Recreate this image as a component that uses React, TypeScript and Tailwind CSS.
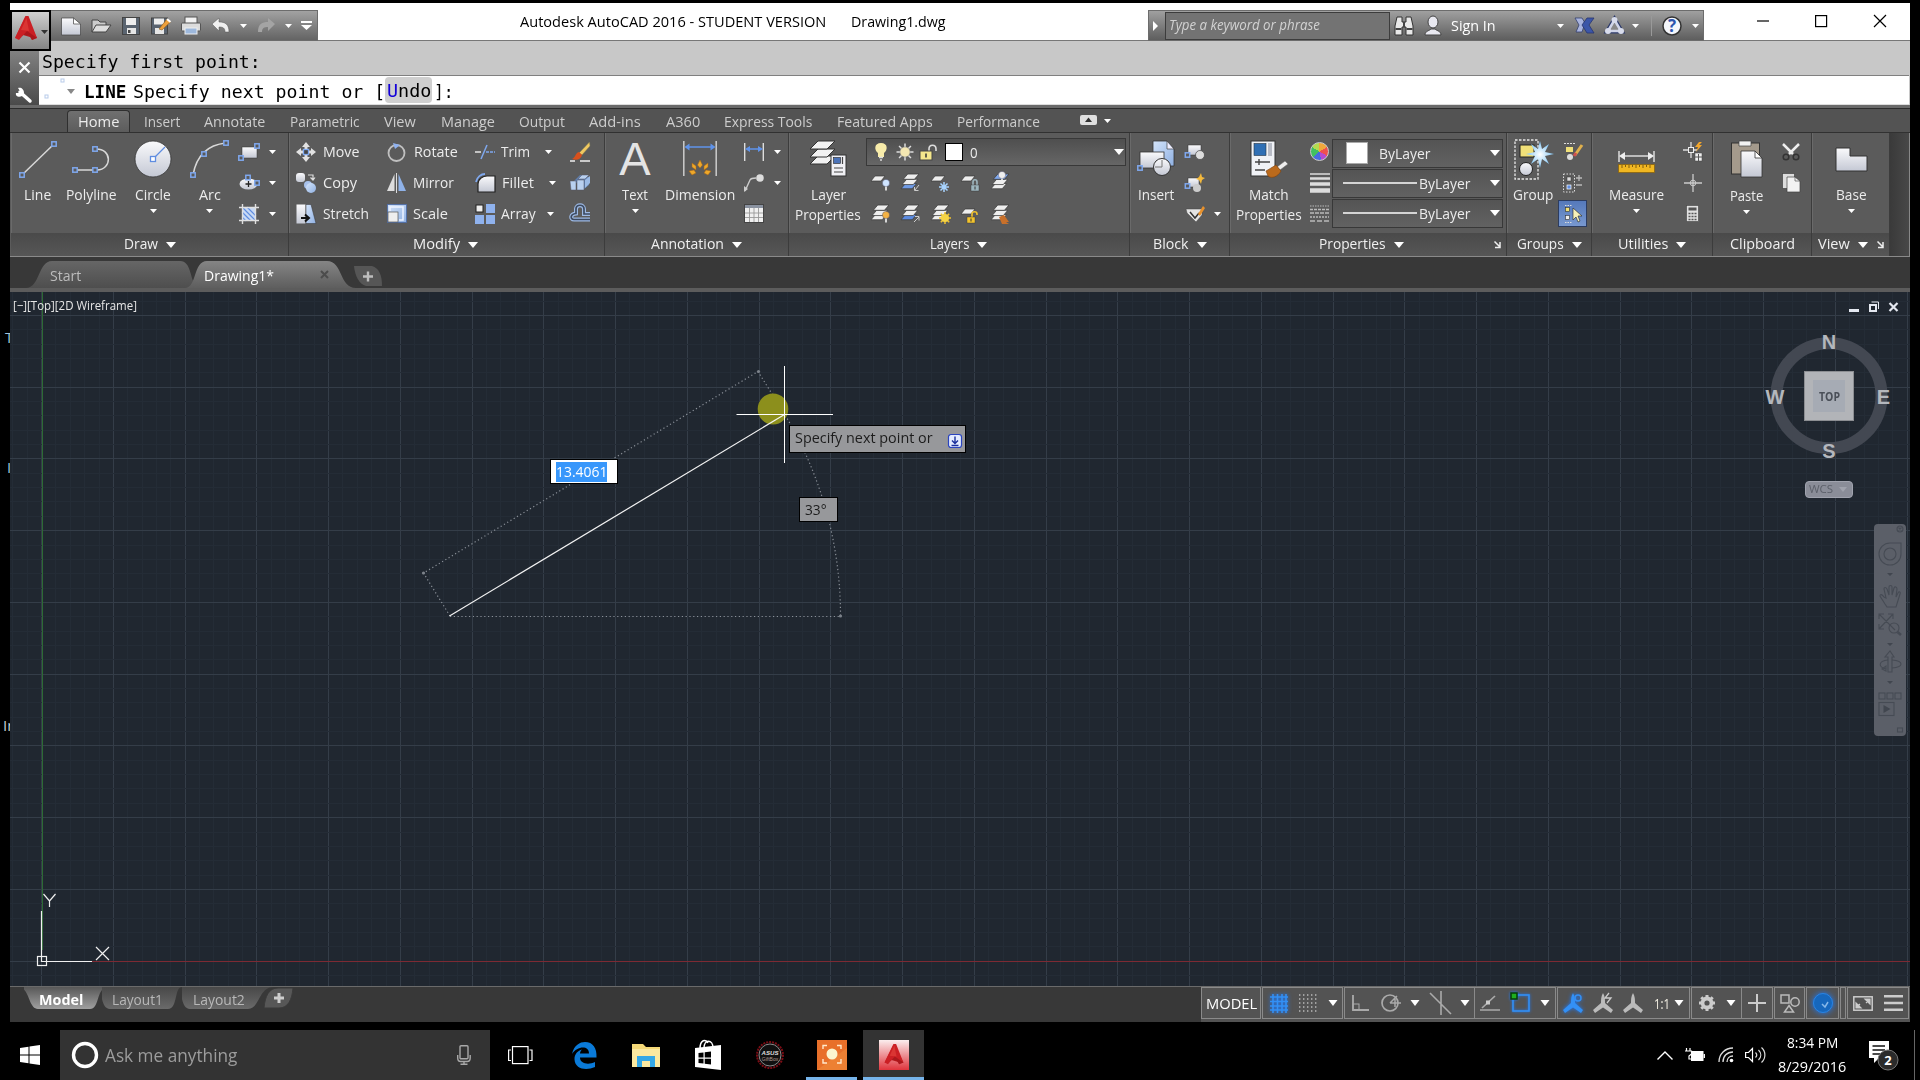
import { useLayoutEffect, useRef, useState } from "react";
import type { ReactNode } from "react";

/* Text squeezed or stretched to a known width. */
function Fit({ w, children, className = "" }: { w: number; children: ReactNode; className?: string }) {
  const ref = useRef<HTMLSpanElement>(null);
  const [k, setK] = useState(1);
  useLayoutEffect(() => {
    if (ref.current) setK(w / ref.current.offsetWidth);
  }, [w]);
  return (
    <span className={"inline-block shrink-0 whitespace-nowrap leading-5 " + className} style={{ width: w }}>
      <span ref={ref} className="inline-block origin-left whitespace-pre" style={{ transform: `scaleX(${k})` }}>
        {children}
      </span>
    </span>
  );
}

function S({ w, h, children, className = "" }: { w: number; h: number; children: ReactNode; className?: string }) {
  return (
    <svg width={w} height={h} viewBox={`0 0 ${w} ${h}`} className={"block shrink-0 overflow-visible " + className}>
      {children}
    </svg>
  );
}

function Caret({ big = false, className = "" }: { big?: boolean; className?: string }) {
  return big ? (
    <S w={10} h={6} className={className}><path d="M0 0H10L5 6Z" fill="#fff" /></S>
  ) : (
    <S w={7} h={4} className={className}><path d="M0 0H7L3.5 4Z" fill="#fff" /></S>
  );
}

const Node = ({ x, y }: { x: number; y: number }) => (
  <rect x={x - 2.2} y={y - 2.2} width={4.4} height={4.4} fill="#5a5a5a" stroke="#7fa8ee" strokeWidth={1.5} />
);

const Sheet = ({ x, y, f = "#eee" }: { x: number; y: number; f?: string }) => (
  <path d={`M${x + 4} ${y}h10l-4 5h-10z`} fill={f} stroke="#3a3a3a" strokeWidth={0.7} />
);

const Stack = ({ a = "#eee", b = "#eee", c = "#eee" }: { a?: string; b?: string; c?: string }) => (
  <g transform="scale(1.12 1.05)">
    <Sheet x={0} y={10} f={c} />
    <Sheet x={1} y={6} f={b} />
    <Sheet x={2} y={1} f={a} />
  </g>
);

function Defs() {
  return (
    <svg className="absolute h-0 w-0">
      <defs>
        <linearGradient id="metal" x1="0" y1="0" x2="0" y2="1"><stop offset="0" stopColor="#fafafc" /><stop offset="1" stopColor="#c4c8d4" /></linearGradient>
        <linearGradient id="sky" x1="0" y1="0" x2="1" y2="1"><stop offset="0" stopColor="#d4e4fa" /><stop offset="1" stopColor="#8fb0e2" /></linearGradient>
        <linearGradient id="tabOn" x1="0" y1="0" x2="0" y2="1"><stop offset="0" stopColor="#858585" /><stop offset="1" stopColor="#5e5e5e" /></linearGradient>
        <linearGradient id="tabOff" x1="0" y1="0" x2="0" y2="1"><stop offset="0" stopColor="#666" /><stop offset="1" stopColor="#4e4e4e" /></linearGradient>
        <linearGradient id="modelOn" x1="0" y1="0" x2="0" y2="1"><stop offset="0" stopColor="#585858" /><stop offset="1" stopColor="#a0a0a0" /></linearGradient>
        <linearGradient id="layoutOff" x1="0" y1="0" x2="0" y2="1"><stop offset="0" stopColor="#484848" /><stop offset="1" stopColor="#6a6a6a" /></linearGradient>
        <linearGradient id="taskAcad" x1="0" y1="0" x2="0" y2="1"><stop offset="0" stopColor="#fbeeee" /><stop offset="1" stopColor="#e0343c" /></linearGradient>
        <radialGradient id="spark"><stop offset="0" stopColor="#fff" /><stop offset="1" stopColor="#7cc3f5" /></radialGradient>
      </defs>
    </svg>
  );
}

const LogoA = () => (
  <>
    <path d="M10.500 0L0 22L8 19.500L10.500 12Z" fill="#e0312f" />
    <path d="M10.500 0L22 22L15 21L8 19L13 14Z" fill="#b3171b" />
    <path d="M10.500 0L13.500 0L22 22L17 24L14 19H8L4 24L0 22Z" fill="#cb1f24" />
    <path d="M11.500 2L14 15L6 14Z" fill="#e4453d" opacity={0.6} />
    <path d="M4 24L8 19H14L17 24L22 22L12 15Z" fill="#8f1015" opacity={0.55} />
  </>
);

function QuickAccess() {
  return (
    <div className="mt-[7px] flex h-[31px] w-[267px] items-center border border-l-0 border-[#6c6c6c] bg-linear-to-b from-[#a2a2a2] to-[#646464]">
      <S w={20} h={18} className="ml-[10px]"><path d="M.5 1h12l7 6v11H.500z" fill="url(#metal)" stroke="#444" strokeWidth={0.700} /><path d="M12.500 1l7 6h-7z" fill="#fff" stroke="#555" strokeWidth={0.800} /></S>
      <S w={20} h={16} className="ml-[10px]"><path d="M1 14V2h6l2 2h6v4" fill="#ccc" stroke="#444" /><path d="M1 14L5 7h15l-5 7z" fill="#ddd" stroke="#444" /></S>
      <S w={18} h={18} className="ml-[11px]"><rect x={0.500} y={0.500} width={17} height={17} fill="#5a6470" stroke="#444" /><rect x={4} y={1} width={10} height={7} fill="#eee" /><rect x={5} y={11} width={9} height={6} fill="#e6e6e6" /><rect x={6} y={13} width={2.500} height={3} fill="#444" /></S>
      <S w={20} h={18} className="ml-[11px]"><rect x={0.500} y={1} width={16} height={16} fill="#5a6470" stroke="#444" /><rect x={3} y={1.500} width={10} height={6} fill="#eee" /><rect x={4} y={11} width={9} height={6} fill="#e6e6e6" /><path d="M8 12L16 2l3.500 3L11 13z" fill="#eda03c" stroke="#8a5a1a" strokeWidth={0.600} /><path d="M16 2l3.500 3" stroke="#fff" strokeWidth={2} /></S>
      <S w={20} h={18} className="ml-[10px]"><rect x={4} y={0} width={12} height={7} fill="#f2f2f2" stroke="#555" /><rect x={0.500} y={6} width={19} height={8} rx={1} fill="#dcdcdc" stroke="#555" /><rect x={4} y={11} width={12} height={6} fill="#9db8dc" stroke="#eee" /></S>
      <S w={18} h={15} className="ml-[11px]"><path d="M0 6L7 0v4c6 0 10 2 10 10h-4c0-4-2-5-6-5v4z" fill="#f0f0f0" stroke="#555" strokeWidth={0.500} /></S>
      <Caret className="ml-[10px]" />
      <S w={18} h={15} className="ml-[10px]"><path d="M18 6L11 0v4C5 4 1 6 1 14h4c0-4 2-5 6-5v4z" fill="#a4a4a4" /></S>
      <Caret className="ml-[10px]" />
      <S w={11} h={9} className="ml-[9px]"><path d="M0 0H11V2H0ZM0 4H11L5.500 9Z" fill="#fff" /></S>
    </div>
  );
}

function InfoCenter() {
  return (
    <div className="mt-[7px] flex h-[31px] w-[556px] items-center border border-[#6c6c6c] bg-linear-to-b from-[#a0a0a0] to-[#5e5e5e]">
      <S w={5} h={10} className="ml-1"><path d="M0 0L5 5L0 10Z" fill="#fff" /></S>
      <div className="ml-[7px] flex h-[28px] w-[225px] items-center border border-[#3c3c3c] bg-[#737373] pl-[3px]">
        <Fit w={151} className="-mt-[2px] text-[14px] text-[#d2d2d2] italic">Type a keyword or phrase</Fit>
      </div>
      <S w={20} h={18} className="ml-1"><path d="M3 0h5v5h4V0h5l2 9v9h-7v-8H8v8H1V9z" fill="#e8e8e8" stroke="#333" /><path d="M1.500 12h6M12.500 12h6M10 5v5" stroke="#444" strokeWidth={2} /></S>
      <S w={16} h={19} className="ml-[11px]"><ellipse cx={8} cy={6} rx={5} ry={6} fill="#e8e8f0" stroke="#444" /><path d="M0 19c0-4 4-4 6-6h4c2 2 6 2 6 6z" fill="#e8e8f0" stroke="#444" /></S>
      <Fit w={45} className="-mt-[2px] ml-[10px] text-[15px] text-white">Sign In</Fit>
      <Caret className="ml-[61px]" />
      <S w={19} h={17} className="ml-[11px]"><path d="M0 1h7l3 5-3 9H1l3-7z" fill="#a9b4de" stroke="#34406f" strokeWidth={0.800} /><path d="M19 1h-7L7 8l5 8h7l-5-8z" fill="#3c56a8" stroke="#28366f" strokeWidth={0.800} /></S>
      <S w={19} h={17} className="ml-[11px]"><path d="M9.500 3L16 14H3Z" fill="none" stroke="#2c3a6b" strokeWidth={5} /><path d="M9.500 3L16 14H3Z" fill="#888" stroke="#cfd4e8" strokeWidth={2.500} /><circle cx={9.500} cy={3} r={3} fill="#d8dcec" /><circle cx={3} cy={14} r={3} fill="#d8dcec" /><circle cx={16} cy={14} r={3} fill="#d8dcec" /></S>
      <Caret className="ml-2" />
      <div className="ml-[12px] h-5 w-px bg-[#999]" />
      <S w={20} h={20} className="ml-[10px]"><circle cx={10} cy={10} r={9} fill="#f4f6fb" stroke="#333" strokeWidth={1.500} /><text x={10} y={16} textAnchor="middle" fontSize={17} fontWeight={700} fill="#2e55ae" fontFamily="Open Sans, sans-serif">?</text></S>
      <Caret className="ml-[10px]" />
    </div>
  );
}

function TitleBar() {
  return (
    <header className="relative flex h-[38px] border-b border-[#777] bg-white">
      <div className="absolute top-[7px] left-0 z-10 flex h-[41px] w-[41px] border-2 border-black bg-linear-to-b from-[#cfcfcf] to-[#858585]">
        <S w={24} h={25} className="mt-1 ml-[3px]"><LogoA /></S>
        <S w={7} h={4} className="mt-[18px] ml-[2px]"><path d="M0 0H7L3.500 4Z" fill="#333" /></S>
      </div>
      <div className="w-[41px]" />
      <QuickAccess />
      <div className="flex w-[830px] items-center gap-[25px] pb-0 pl-[202px]">
        <Fit w={306} className="-mt-[1px] text-[15px] text-black">Autodesk AutoCAD 2016 - STUDENT VERSION</Fit>
        <Fit w={95} className="-mt-[1px] text-[15px] text-black">Drawing1.dwg</Fit>
      </div>
      <InfoCenter />
      <div className="flex items-start pt-[12px] pl-[53px]">
        <S w={12} h={12}><path d="M0 6H12" stroke="#000" strokeWidth={1.200} /></S>
        <S w={12} h={12} className="ml-[46px]"><rect x={0.600} y={0.600} width={11} height={11} fill="none" stroke="#000" strokeWidth={1.200} /></S>
        <S w={12} h={12} className="ml-[47px]"><path d="M0 0L12 12M12 0L0 12" stroke="#000" strokeWidth={1.200} /></S>
      </div>
    </header>
  );
}

function CommandLine() {
  return (
    <section className="flex h-[64px] bg-[#c8c8c8]">
      <div className="flex w-[29px] flex-col items-center bg-linear-to-b from-[#8c8c8c] to-[#4a4a4a] pt-[21px] pr-[1px]">
        <S w={11} h={11}><path d="M0.500 0.500L10.500 10.500M10.500 .5L.5 10.500" stroke="#fff" strokeWidth={2.200} /></S>
        <S w={18} h={17} className="mt-[14px]"><path d="M5 5L15 14" stroke="#fff" strokeWidth={3.500} strokeLinecap="round" /><path d="M3 1l2 3-1 2-3 0C0 9 4 11 7 9l2-3C9 2 6 0 3 1z" fill="#fff" /></S>
      </div>
      <div className="flex w-[1870px] flex-col font-['DejaVu_Sans_Mono',monospace] text-[18px] text-black">
        <div className="flex h-[35px] items-center border-b border-[#808080] pt-[9px] pl-[3px]">
          <Fit w={219} className="-mt-[1px]">Specify first point:</Fit>
        </div>
        <div className="flex h-[29px] items-center border-b border-[#ddd] bg-white">
          <S w={20} h={20} className="ml-[5px]"><rect x={1} y={15} width={3} height={3} fill="none" stroke="#b8cbea" /><rect x={17} y={-1} width={3} height={3} fill="none" stroke="#b8cbea" /></S>
          <S w={8} h={5} className="mt-[2px] ml-[3px]"><path d="M0 0H8L4 5Z" fill="#888" /></S>
          <Fit w={42} className="mt-[3px] ml-[9px] font-bold">LINE</Fit>
          <Fit w={252} className="mt-[3px] ml-[7px]">Specify next point or [</Fit>
          <span className="flex h-[26px] w-[47px] items-center justify-center rounded bg-[#cfcfcf]">
            <Fit w={44} className="mt-[2px]"><span className="text-[#1400d8]">U</span>ndo</Fit>
          </span>
          <Fit w={20} className="mt-[3px] ml-[2px]">]:</Fit>
        </div>
      </div>
    </section>
  );
}

const TABS: [string, number][] = [
  ["Insert", 36], ["Annotate", 61], ["Parametric", 70], ["View", 32], ["Manage", 54], ["Output", 46], ["Add-ins", 52],
  ["A360", 34], ["Express Tools", 88], ["Featured Apps", 96], ["Performance", 83],
];

function RibbonTabs() {
  return (
    <nav className="flex h-[28px] items-end border-t-[3px] border-b border-t-[#6a6a6a] border-b-[#313131] bg-[#535353] shadow-[inset_0_1px_0_#2c2c2c]">
      <div className="ml-[57px] flex h-[22px] w-[63px] items-center justify-center rounded-t-sm border border-b-0 border-[#2f2f2f] bg-linear-to-b from-[#707070] to-[#5c5c5c]">
        <Fit w={41} className="-mt-[2px] text-[15px] text-[#ececec]">Home</Fit>
      </div>
      <div className="ml-[14px] flex h-[22px] items-center gap-[24.400px] text-[15px] text-[#cdcdcd]">
        {TABS.map(([t, w]) => <Fit key={t} w={w} className="-mt-[1px]">{t}</Fit>)}
      </div>
      <S w={17} h={10} className="mb-[7px] ml-[40px]"><rect width={17} height={10} rx={2} fill="#e0e0e0" /><path d="M8.500 2.500L12 7H5Z" fill="#333" /></S>
      <Caret className="mb-[9px] ml-[7px]" />
    </nav>
  );
}

function Panel({ className, title, titleW, caret = true, pad = "", launcher = false, children }: {
  className: string; title: string; titleW: number; caret?: boolean; pad?: string; launcher?: boolean; children: ReactNode;
}) {
  return (
    <section className={"flex shrink-0 flex-col border-r border-[#3c3c3c] bg-[#5b5b5b] shadow-[inset_1px_0_0_#6a6a6a] " + className}>
      <div className="flex h-[100px]">{children}</div>
      <div className={"relative flex h-[23px] items-center justify-center bg-linear-to-b from-[#4a4a4a] to-[#565656] text-[15px] text-[#f0f0f0] " + pad}>
        <Fit w={titleW} className="-mt-[3px]">{title}</Fit>
        {caret && <Caret big className="ml-2" />}
        {launcher && (
          <S w={7} h={7} className="absolute top-[8px] right-[5px]"><path d="M0.500 .5L6 6M6 1V6.500H1" fill="none" stroke="#eee" strokeWidth={1.500} /></S>
        )}
      </div>
    </section>
  );
}

function Big({ className, iconBox = "h-[55px]", label, w, label2, w2 = 0, caret = false, children }: {
  className: string; iconBox?: string; label: string; w: number; label2?: string; w2?: number; caret?: boolean; children: ReactNode;
}) {
  return (
    <div className={"flex shrink-0 flex-col items-center text-[15px] text-[#ececec] " + className}>
      <div className={"flex items-start justify-center pt-[7px] " + iconBox}>{children}</div>
      <Fit w={w} className="-mt-[4px]">{label}</Fit>
      {label2 && <Fit w={w2}>{label2}</Fit>}
      {caret && <Caret className="mt-[5px]" />}
    </div>
  );
}

const Rows = ({ className, children }: { className: string; children: ReactNode }) => (
  <div className={"flex shrink-0 flex-col pt-[3px] " + className}>{children}</div>
);
const Row = ({ className = "", children }: { className?: string; children?: ReactNode }) => (
  <div className={"flex h-[31px] items-center text-[15px] text-[#ececec] " + className}>{children}</div>
);

function DrawPanel() {
  return (
    <Panel className="w-[278px]" title="Draw" titleW={34}>
      <Big className="w-[53px]" label="Line" w={27}>
        <S w={38} h={38}><path d="M3 35L35 4" stroke="#d8d8d8" strokeWidth={1.500} /><Node x={3} y={35} /><Node x={35} y={4} /></S>
      </Big>
      <Big className="w-[54px]" label="Polyline" w={51}>
        <S w={40} h={38}><path d="M3 30H26C41 30 42 8 24 9" fill="none" stroke="#d8d8d8" strokeWidth={1.500} /><Node x={4} y={30} /><Node x={24} y={30} /><Node x={24} y={9} /></S>
      </Big>
      <Big className="w-[70px]" label="Circle" w={36} caret>
        <S w={38} h={38}><circle cx={19} cy={19} r={18} fill="url(#metal)" stroke="#333" strokeWidth={0.800} /><path d="M19 19L31 7" stroke="#5f8de0" strokeWidth={1.200} /><rect x={16.500} y={16.500} width={5} height={5} fill="#fff" stroke="#5f8de0" strokeWidth={1.300} /></S>
      </Big>
      <Big className="w-[43px]" label="Arc" w={22} caret>
        <S w={40} h={38}><path d="M3 35C6 18 16 5 36 3" fill="none" stroke="#d8d8d8" strokeWidth={1.500} /><Node x={3} y={35} /><Node x={14} y={14} /><Node x={36} y={3} /></S>
      </Big>
      <Rows className="w-[36px] items-center">
        <Row><S w={20} h={16}><rect x={3} y={3} width={15} height={11} fill="url(#metal)" stroke="#333" strokeWidth={0.500} /><Node x={2} y={14} /><Node x={18} y={2} /></S></Row>
        <Row><S w={20} h={14}><ellipse cx={9.500} cy={8} rx={9} ry={5.500} fill="url(#metal)" /><path d="M9.500 5v6M6.500 8h6" stroke="#222" strokeWidth={1.300} /><Node x={9} y={1.500} /><Node x={18} y={7} /></S></Row>
        <Row><S w={20} h={20}><rect x={3} y={3} width={14} height={14} fill="#c8daf5" /><path d="M3 8L12 17M3 3L17 17M8 3L17 12M3 13l4 4" stroke="#5f8de0" strokeWidth={1.200} /><path d="M3.500 0V20M0 3.500H20M16.500 0V20M0 16.500H20" stroke="#e0e0e0" strokeWidth={1.400} /></S></Row>
      </Rows>
      <Rows className="w-[10px] items-center"><Row><Caret /></Row><Row><Caret /></Row><Row><Caret /></Row></Rows>
    </Panel>
  );
}

function ModifyPanel() {
  return (
    <Panel className="w-[316px]" title="Modify" titleW={47} pad="pr-[2px]">
      <Rows className="ml-[7px] w-[91px]">
        <Row><S w={20} h={20}><path d="M10 0l4 5h-2.500v3h-3V5H6zM10 20l4-5h-2.500v-3h-3v3H6zM0 10l5-4v2.500h3v3H5V14zM20 10l-5-4v2.500h-3v3h3V14z" fill="#e2e2e2" /><rect x={7.500} y={7.500} width={5} height={5} fill="#444" stroke="#7fa8ee" strokeWidth={1.300} /></S><Fit w={36} className="-mt-px ml-[6.500px]">Move</Fit></Row>
        <Row><S w={20} h={20}><rect width={9} height={9} rx={3} fill="url(#metal)" /><circle cx={12} cy={12} r={4} fill="#a8c2ec" /><circle cx={15} cy={15} r={5} fill="url(#sky)" /><path d="M12 2h5v4M14.500 4.500L17 7l2-2.500" fill="none" stroke="#ddd" strokeWidth={1.200} /></S><Fit w={34} className="-mt-px ml-[7px]">Copy</Fit></Row>
        <Row><S w={20} h={20}><rect x={0.500} y={0.500} width={9} height={19} fill="url(#metal)" /><path d="M10 .5h5l5 19H10z" fill="url(#sky)" stroke="#333" strokeWidth={0.500} /><path d="M5 14h7M9 10.500L13 14 9 17.500" stroke="#111" strokeWidth={2} fill="none" /></S><Fit w={46} className="-mt-px ml-[7px]">Stretch</Fit></Row>
      </Rows>
      <Rows className="w-[88px]">
        <Row><S w={19} h={20}><circle cx={9.500} cy={11} r={8} fill="none" stroke="#c0c0c0" strokeWidth={1.800} /><path d="M6 1l7 2-5 4z" fill="#8fb2f0" /></S><Fit w={44} className="-mt-px ml-[8px]">Rotate</Fit></Row>
        <Row><S w={19} h={20}><path d="M7.500 1V18H0Z" fill="#ddd" /><path d="M11.500 1V18H19Z" fill="#8fb2e8" /><path d="M9.500 0V20" stroke="#ddd" /></S><Fit w={41} className="-mt-px ml-[7px]">Mirror</Fit></Row>
        <Row><S w={20} h={19}><rect x={0.500} y={0.500} width={19} height={18} fill="url(#sky)" stroke="#4a6aa8" strokeWidth={0.800} /><path d="M3 7V3H16V16H12" fill="none" stroke="#eef4ff" strokeWidth={1.500} /><rect x={1} y={8} width={10} height={10} fill="#eee" stroke="#555" strokeWidth={0.700} /></S><Fit w={35} className="-mt-px ml-[6px]">Scale</Fit></Row>
      </Rows>
      <Rows className="w-[95px]">
        <Row><S w={20} h={16}><path d="M0 8H6" stroke="#e6e6e6" strokeWidth={1.500} /><path d="M6 15L12 1" stroke="#7fa8ee" strokeWidth={1.500} /><path d="M11 8H20" stroke="#7fa8ee" strokeWidth={1.300} strokeDasharray="3 1" /></S><Fit w={29} className="-mt-px ml-[6px]">Trim</Fit><Caret className="ml-[15px]" /></Row>
        <Row><S w={20} h={20}><path d="M3 19V11C3 6 8 3 12 3h8v16z" fill="url(#metal)" stroke="#222" strokeWidth={1.200} /><path d="M1 9C2 4 6 1 10 1" fill="none" stroke="#7fa8ee" strokeWidth={1.800} /></S><Fit w={32} className="-mt-px ml-[7px]">Fillet</Fit><Caret className="ml-[15px]" /></Row>
        <Row><S w={20} h={20}><rect x={1} y={1} width={7} height={7} fill="#eee" stroke="#222" /><rect x={11} width={9} height={9} fill="#8fb2ee" /><rect y={11} width={9} height={9} fill="#8fb2ee" /><rect x={11} y={11} width={9} height={9} fill="#8fb2ee" /></S><Fit w={35} className="-mt-px ml-[6px]">Array</Fit><Caret className="ml-[11px]" /></Row>
      </Rows>
      <Rows className="w-[22px]">
        <Row><S w={20} h={20}><path d="M19.500 0L9 11l3 2L20 4z" fill="#f0c860" stroke="#775" strokeWidth={0.500} /><path d="M9 10C5 11 6 15 2 17c5 2 9 0 10-4z" fill="#d8501c" /><path d="M0 19H5M10 19H20" stroke="#eee" strokeWidth={1.400} /></S></Row>
        <Row><S w={20} h={18}><path d="M4 7L10 1l9 2v8l-5 4z" fill="#5f7fae" /><path d="M0 7h6v9H1zM7 6h7v10H7zM8 5l4-4h7l-4 4z" fill="#b8d0f0" stroke="#556" strokeWidth={0.500} /><path d="M15 6l5-4v7l-5 5z" fill="#9cbbe6" /></S></Row>
        <Row><S w={20} h={19}><path d="M20 15.500H4C0 15.500 0 10 6 9.500V5c0-5 8-5 8 0v5H20" fill="none" stroke="#9db9e4" strokeWidth={4} /><path d="M20 15.500H4C0 15.500 0 10 6 9.500V5c0-5 8-5 8 0v5H20" fill="none" stroke="#3c4a60" strokeWidth={1.700} /></S></Row>
      </Rows>
    </Panel>
  );
}

function AnnotationPanel() {
  return (
    <Panel className="w-[184px]" title="Annotation" titleW={73}>
      <Big className="ml-[5px] w-[50px]" label="Text" w={26} caret>
        <span className="w-[34px] text-center font-['Liberation_Sans',Arial,sans-serif] text-[47px] leading-[38px] text-[#e4e4e4]">A</span>
      </Big>
      <Big className="w-[79px]" label="Dimension" w={70}>
        <S w={34} h={38}><path d="M.8 1V36M33.200 1V36" stroke="#ccc" strokeWidth={1.500} /><path d="M3 7H31" stroke="#5f93ea" strokeWidth={1.500} /><path d="M1.500 7l5-3.500v7zM32.500 7l-5-3.500v7z" fill="#5f93ea" /><path d="M17 20l2.500 5-2.500 3-2.500-3zM9 23l4 3v4l-4-3zM25 23l-4 3v4l4-3zM6 31l5-1 2 3-4 2zM28 31l-5-1-2 3 4 2z" fill="#eea82a" stroke="#a86414" strokeWidth={0.500} /></S>
      </Big>
      <Rows className="w-[29px] items-center">
        <Row><S w={20} h={18}><path d="M.7 0V18M19.300 0V18" stroke="#ddd" strokeWidth={1.400} /><path d="M3 6H17" stroke="#5f93ea" strokeWidth={1.500} /><path d="M1 6l5-3v6zM19 6l-5-3v6z" fill="#5f93ea" /></S></Row>
        <Row><S w={20} h={18}><path d="M1 17L6 6C7 4 9 4 12 4" fill="none" stroke="#ccc" strokeWidth={1.400} /><circle cx={16} cy={4} r={3.800} fill="#ddd" /><path d="M0 18l0-6 4 3z" fill="#ccc" /></S></Row>
        <Row><S w={20} h={19}><rect x={0.500} y={0.500} width={19} height={18} fill="#f0f0f0" stroke="#444" /><rect x={1} y={1} width={18} height={3} fill="#8a92a0" /><path d="M1 9H19M1 13.500H19M5.500 4V18M10 4V18M14.500 4V18" stroke="#999" strokeWidth={0.900} /></S></Row>
      </Rows>
      <Rows className="w-[18px] items-center"><Row><Caret /></Row><Row><Caret /></Row><Row /></Rows>
    </Panel>
  );
}

const Bulb = ({ x, y, f = "#cfe4ff" }: { x: number; y: number; f?: string }) => (
  <><circle cx={x} cy={y} r={3.600} fill={f} stroke="#446" strokeWidth={0.400} /><path d={`M${x} ${y + 3.600}v4`} stroke="#eee" strokeWidth={1.700} /></>
);
const Burst = ({ x, y, f, r = 5 }: { x: number; y: number; f: string; r?: number }) => (
  <path d={`M${x - r} ${y}h${2 * r}M${x} ${y - r}v${2 * r}M${x - r * 0.7} ${y - r * 0.7}l${r * 1.4} ${r * 1.4}M${x + r * 0.7} ${y - r * 0.7}l${-r * 1.4} ${r * 1.4}`} stroke={f} strokeWidth={1.500} />
);
const Lock = ({ x, y, f, open = false }: { x: number; y: number; f: string; open?: boolean }) => (
  <><path d={open ? `M${x + 5} ${y}v-3c0-3 5-3 5 0v1` : `M${x + 2} ${y}v-3c0-3 4-3 4 0v3`} fill="none" stroke={f} strokeWidth={1.600} /><rect x={x} y={y} width={8} height={6} fill={f} stroke="#333" strokeWidth={0.400} /><path d={`M${x + 4} ${y + 1.500}v3`} stroke="#333" /></>
);

function LayersPanel() {
  return (
    <Panel className="w-[341px]" title="Layers" titleW={39} pad="pr-[1px]">
      <Big className="w-[78px]" label="Layer" w={35} label2="Properties" w2={66}>
        <S w={37} h={38}>
          {[16, 9, 1].map((y) => <path key={y} d={`M8 ${y}H25L17 ${y + 8}H0Z`} fill="#f2f2f2" stroke="#333" />)}
          <rect x={21} y={15} width={15} height={21} fill="#f0f0f4" stroke="#333" /><rect x={23.500} y={17.500} width={7} height={6} fill="#4a72b8" stroke="#222" strokeWidth={0.600} /><path d="M24 28h9M24 32h9M32.500 17v7" stroke="#444" strokeWidth={1.200} />
        </S>
      </Big>
      <div className="-ml-[1px] flex flex-col">
        <div className="mt-[5px] flex h-[28px] w-[260px] items-center border border-[#383838] bg-linear-to-b from-[#4f4f4f] to-[#666] text-[15px] text-[#ececec]">
          <S w={12} h={18} className="ml-2"><path d="M6 0C-1 0-1 7 3 10v4h6v-4C13 7 13 0 6 0z" fill="#f8ecaa" /><path d="M4 14.500h4M5 17h2" stroke="#ddd" strokeWidth={1.500} /></S>
          <S w={18} h={18} className="ml-[9px]"><Burst x={9} y={9} f="#ddd" r={8.500} /><circle cx={9} cy={9} r={5} fill="#f4e7b2" stroke="#888" strokeWidth={0.500} /></S>
          <S w={19} h={18} className="ml-[5px]"><path d="M10 9V6c0-5 7-5 7 0v2" fill="none" stroke="#ddd" strokeWidth={1.600} /><rect x={1} y={8} width={12} height={9} fill="#f4e78c" stroke="#444" /><path d="M7 10.500v4" stroke="#333" strokeWidth={1.500} /></S>
          <div className="ml-[7px] h-[18px] w-[18px] border border-black bg-white" />
          <Fit w={8} className="ml-[7px]">0</Fit>
          <Caret big className="ml-auto mr-[1px]" />
        </div>
        <div className="mt-[1px] flex h-[31px] items-center pl-[5px] [&>svg]:mr-[10px]">
          <S w={20} h={20}><Sheet x={0} y={3} /><Bulb x={15} y={10} /></S>
          <S w={20} h={20}><Stack a="#eee" b="#eee" c="#6f9be6" /><path d="M18 12l-4 5M13.500 14v3.500h4" stroke="#ccc" fill="none" /></S>
          <S w={20} h={20}><Sheet x={0} y={3} /><Burst x={13} y={14} f="#a8d4ff" r={5} /></S>
          <S w={20} h={20}><Sheet x={0} y={3} /><Lock x={10} y={12} f="#9db5bd" /></S>
          <S w={20} h={20}><Stack a="#7fa8ee" /><Bulb x={11} y={2} f="#eee" /></S>
        </div>
        <div className="flex h-[31px] items-center pl-[5px] [&>svg]:mr-[10px]">
          <S w={20} h={20}><Stack /><Bulb x={15} y={11} f="#f4b244" /></S>
          <S w={20} h={20}><Stack c="#5a8ae0" /><path d="M13 18l5-5M14 12.500h4v4" stroke="#ccc" fill="none" /></S>
          <S w={20} h={20}><Stack /><Burst x={14} y={14} f="#f2c32e" r={6} /><circle cx={14} cy={14} r={4} fill="#f6d445" /></S>
          <S w={20} h={20}><Sheet x={0} y={5} /><Lock x={6} y={13} f="#f2c32e" open /></S>
          <S w={20} h={20}><Stack /><path d="M8 13l5-2 5 7-3 0 3 2-7 0z" fill="#c8702a" /></S>
        </div>
      </div>
    </Panel>
  );
}

function BlockPanel() {
  return (
    <Panel className="w-[100px]" title="Block" titleW={36}>
      <Big className="w-[52px]" label="Insert" w={36}>
        <S w={38} h={38}><path d="M16 1H30L37 9V26H16Z" fill="url(#sky)" stroke="#333" strokeWidth={0.800} /><path d="M30 1L37 9H30Z" fill="#eef" stroke="#444" strokeWidth={0.700} /><rect x={3} y={12} width={24} height={16} fill="url(#metal)" stroke="#333" strokeWidth={0.800} /><circle cx={25} cy={27} r={8.500} fill="url(#metal)" stroke="#333" /><path d="M25 20V27H18" stroke="#777" fill="none" /><Node x={3} y={28} /></S>
      </Big>
      <Rows className="w-[45px]">
        <Row className="pl-[3px]"><S w={20} h={18}><rect x={3} y={2} width={13} height={10} fill="url(#metal)" stroke="#333" strokeWidth={0.500} /><circle cx={15} cy={12} r={4.500} fill="#ddd" stroke="#444" strokeWidth={0.700} /><Node x={2.500} y={12} /></S></Row>
        <Row className="pl-[3px]"><S w={20} h={18}><rect x={3} y={4} width={11} height={9} fill="url(#metal)" stroke="#333" strokeWidth={0.500} /><circle cx={12} cy={14} r={4} fill="#ccc" /><path d="M16-1l1 4 3 1-3 2-1 4-2-4-3-1 3-2z" fill="#f4b93c" /><Node x={2.500} y={12} /></S></Row>
        <Row className="pl-[3px]"><S w={20} h={18}><path d="M1 4h16v6l-6 7-9-9z" fill="#e4e4e4" stroke="#444" strokeWidth={0.500} /><path d="M5 7l5 6 4-5" stroke="#333" strokeWidth={1.500} fill="none" /><path d="M13 9L18 1l2 2-5 8z" fill="#e8912c" /></S><Caret className="ml-[9px]" /></Row>
      </Rows>
    </Panel>
  );
}

function ByLayerRow({ swatch = false }: { swatch?: boolean }) {
  return (
    <div className="flex h-[29px] w-[171px] items-center border border-[#383838] bg-linear-to-b from-[#545454] to-[#626262] text-[15px] text-[#ececec]">
      {swatch ? <><div className="ml-[14px] h-5 w-5 bg-white shadow-[0_0_0_1px_#aaa]" /><Fit w={51} className="ml-[12px]">ByLayer</Fit></>
        : <><div className="ml-[10px] h-[1.500px] w-[74px] bg-[#d4d4d4]" /><Fit w={51} className="ml-[2px]">ByLayer</Fit></>}
      <Caret big className="mr-[2px] ml-auto" />
    </div>
  );
}

function PropertiesPanel() {
  return (
    <Panel className="w-[277px]" title="Properties" titleW={67} pad="pr-[13px]" launcher>
      <Big className="w-[77px]" label="Match" w={40} label2="Properties" w2={66}>
        <S w={38} h={38}><rect x={1} y={1} width={24} height={35} fill="#f0f2f6" stroke="#333" /><rect x={4} y={3.500} width={12} height={12} fill="#2f6fb4" stroke="#234" strokeWidth={0.600} /><rect x={18} y={3} width={4} height={13} fill="#b8bcc6" /><path d="M5 22h15M5 30h10M9 19v6" stroke="#444" strokeWidth={1.400} /><path d="M35 21l3 3-8 6-3-3z" fill="#eee" stroke="#666" strokeWidth={0.500} /><path d="M16 31l10-6 5 6c-3 6-10 8-13 5z" fill="#bb6a1c" stroke="#7a4210" strokeWidth={0.600} /></S>
      </Big>
      <Rows className="w-[25px] items-center">
        <Row>
          <div className="h-[19px] w-[19px] rounded-full border border-[#ccc] bg-[conic-gradient(#f0a83c_0_60deg,#ef5050_60deg_120deg,#b44bd0_120deg_170deg,#4a6be0_170deg_230deg,#42c060_230deg_300deg,#b4dc50_300deg)]" />
        </Row>
        <Row><S w={20} h={20}><path d="M0 1H20" stroke="#ddd" strokeWidth={1.500} /><path d="M0 5.500H20" stroke="#ddd" strokeWidth={2.500} /><path d="M0 11H20" stroke="#ddd" strokeWidth={3.500} /><path d="M0 17.500H20" stroke="#ddd" strokeWidth={4.500} /></S></Row>
        <Row><S w={19} h={17}><path d="M0 1H19" stroke="#bbb" strokeDasharray="1.5 1" /><path d="M0 4.500H19" stroke="#bbb" strokeWidth={1.300} strokeDasharray="3 1" /><path d="M0 8H19" stroke="#bbb" strokeWidth={1.300} strokeDasharray="4 1" /><path d="M0 12H19" stroke="#bbb" strokeWidth={1.300} strokeDasharray="2 1" /><path d="M0 16H19" stroke="#bbb" strokeWidth={1.500} strokeDasharray="5 2" /></S></Row>
      </Rows>
      <div className="mt-[5.500px] flex h-[89px] flex-col gap-[1px]"><ByLayerRow swatch /><ByLayerRow /><ByLayerRow /></div>
    </Panel>
  );
}

function GroupsPanel() {
  return (
    <Panel className="w-[85px]" title="Groups" titleW={47}>
      <Big className="ml-[1px] w-[49px]" label="Group" w={40}>
        <S w={42} h={40} className="-mt-[1px] ml-[3px]"><rect x={2} y={1} width={23} height={39} fill="none" stroke="#e8e8e8" strokeWidth={1.300} strokeDasharray="2.500 1.500" /><rect x={7} y={6} width={14} height={12} fill="#f0e078" stroke="#222" /><circle cx={13} cy={30} r={6.500} fill="url(#metal)" stroke="#222" /><path d="M27 2l2 8 7-5-4 8 9 2-9 2 4 8-7-5-2 9-2-9-7 5 4-8-9-2 9-2-4-8 7 5z" fill="url(#spark)" /></S>
      </Big>
      <Rows className="w-[31px] items-center">
        <Row><S w={20} h={18}><path d="M1 .5H12" stroke="#ddd" strokeDasharray="2 1" /><rect x={3} y={4} width={7} height={5} fill="#f0e078" /><circle cx={7} cy={14} r={3} fill="#ddd" /><path d="M19 2L12 12" stroke="#e0b04c" strokeWidth={3} /><path d="M13 10l-2 3" stroke="#d05050" strokeWidth={3} /></S></Row>
        <Row><S w={20} h={20}><rect x={0.500} y={1} width={11} height={18} fill="none" stroke="#ddd" strokeDasharray="1.5 1.5" /><rect x={4} y={4} width={4} height={4} fill="#ddd" stroke="#333" strokeWidth={0.500} /><rect x={4} y={12} width={4} height={4} fill="#5f8de0" stroke="#fff" strokeWidth={0.700} /><path d="M13 5h6M16 2v6M13 12h6" stroke="#bbb" strokeWidth={1.300} /></S></Row>
        <Row><div className="flex h-[27px] w-[29px] items-center justify-center border border-[#2c3c60] bg-linear-to-b from-[#5579bb] to-[#7898cf]"><S w={17} h={18}><path d="M1 .5H8M1 17.500H8" stroke="#ddd" strokeDasharray="1.5 1" /><rect x={1.500} y={2.500} width={4} height={4} fill="#f0e078" stroke="#333" strokeWidth={0.600} /><rect x={1.500} y={10.500} width={4} height={4} fill="#eee" stroke="#333" strokeWidth={0.600} /><path d="M9 3v12l3-3 2 5 2-1-2-5h4z" fill="#f6f0b8" stroke="#222" strokeWidth={0.600} /></S></div></Row>
      </Rows>
    </Panel>
  );
}

function UtilitiesPanel() {
  return (
    <Panel className="w-[121px]" title="Utilities" titleW={50}>
      <Big className="ml-[7px] w-[75px]" label="Measure" w={55} caret>
        <S w={37} h={24} className="mt-[8px]"><path d="M1 3V14M36 3V14M3 8H34" stroke="#ddd" strokeWidth={1.500} /><path d="M1 8l6-4v8zM36 8l-6-4v8z" fill="#eee" /><rect x={0.500} y={16.500} width={36} height={8} fill="#f0b722" stroke="#8a6410" strokeWidth={0.800} /><path d="M4 17v3M7.500 17v2M11 17v3M14.500 17v2M18 17v3M21.500 17v2M25 17v3M28.500 17v2M32 17v3" stroke="#805c10" /></S>
      </Big>
      <Rows className="w-[37px] items-center">
        <Row><S w={20} h={20}><path d="M8 0V16M0 8H14" stroke="#ddd" strokeWidth={1.300} /><rect x={5.500} y={5.500} width={5} height={5} fill="#5a5a5a" stroke="#eee" /><path d="M16 0l-4 5h3l-2 5 6-7h-3l3-3z" fill="#f4a72c" /><rect x={12} y={11} width={7} height={8} fill="#eee" stroke="#444" strokeWidth={0.500} /><path d="M12 15h7M15.500 12v7" stroke="#555" /></S></Row>
        <Row><S w={18} h={18}><path d="M9 0V18M0 9H18" stroke="#ccc" strokeWidth={1.300} /><circle cx={9} cy={9} r={2.800} fill="none" stroke="#ccc" /></S></Row>
        <Row><S w={13} h={17}><rect x={0.500} y={0.500} width={12} height={16} fill="#e0e0e0" stroke="#444" strokeWidth={0.600} /><rect x={2.500} y={2.500} width={8} height={3} fill="#555" /><path d="M2.500 8.500h8M2.500 11.500h8M2.500 14.500h8" stroke="#555" strokeWidth={1.500} strokeDasharray="2 1" /></S></Row>
      </Rows>
    </Panel>
  );
}

function ClipboardPanel() {
  return (
    <Panel className="w-[99px]" title="Clipboard" titleW={65} caret={false}>
      <Big className="w-[67px]" iconBox="h-[56px]" label="Paste" w={33} caret>
        <S w={32} h={38}><rect x={0.500} y={3} width={28} height={31} fill="#a49a8c" stroke="#333" /><path d="M8 1h12v5H8z" fill="#f2f2f2" stroke="#444" strokeWidth={0.700} /><path d="M10 11H24L31 18V37H10Z" fill="url(#metal)" stroke="#333" strokeWidth={0.800} /><path d="M24 11V18H31Z" fill="#fff" stroke="#333" strokeWidth={0.800} /></S>
      </Big>
      <Rows className="w-[22px] items-center">
        <Row><S w={18} h={18}><path d="M1 1L11 11M17 1L7 11" stroke="#eee" strokeWidth={2.500} /><circle cx={4} cy={14} r={2.800} fill="none" stroke="#333" strokeWidth={1.500} /><circle cx={14} cy={14} r={2.800} fill="none" stroke="#333" strokeWidth={1.500} /></S></Row>
        <Row><S w={18} h={19}><rect x={0.500} y={0.500} width={12} height={15} fill="#ddd" stroke="#444" strokeWidth={0.700} /><path d="M5 4H13L18 8V19H5Z" fill="#f2f2f2" stroke="#444" strokeWidth={0.700} /><path d="M13 4V8H18" fill="none" stroke="#555" strokeWidth={0.700} /></S></Row>
      </Rows>
    </Panel>
  );
}

function ViewPanel() {
  return (
    <Panel className="w-[78px]" title="View" titleW={32} pad="pr-[16px]" launcher>
      <Big className="w-[78px]" label="Base" w={31} caret>
        <S w={33} h={26} className="mt-[7px]"><path d="M1 1H15V9H32V24H1Z" fill="url(#metal)" stroke="#333" /></S>
      </Big>
    </Panel>
  );
}

function Ribbon() {
  return (
    <div className="flex h-[124px] border-b border-[#8a8a8a] bg-[#5b5b5b] pl-[1px]">
      <DrawPanel /><ModifyPanel /><AnnotationPanel /><LayersPanel /><BlockPanel /><PropertiesPanel />
      <GroupsPanel /><UtilitiesPanel /><ClipboardPanel /><ViewPanel />
      <div className="flex-1 border-r border-[#888] bg-linear-to-r from-[#3a3a3a] to-[#484848]" />
    </div>
  );
}

function FileTabs() {
  return (
    <div className="flex h-[35px] border-b-4 border-[#5c5c5c] bg-[#383838]">
      <div className="relative flex w-[175px] items-center pt-[4px] pl-[40px]">
        <svg width={170} height={27} className="absolute top-[4px] left-[16px]"><path d="M0 27C14 27 12 0 26 0H154C168 0 162 27 176 27Z" fill="url(#tabOff)" /></svg>
        <Fit w={31} className="relative text-[15px] text-[#bcbcbc]">Start</Fit>
      </div>
      <div className="relative flex w-[168px] items-center pt-[4px] pl-[19px]">
        <svg width={171} height={27} className="absolute top-[4px] left-0"><path d="M0 27C12 27 8 0 22 0H142C158 0 154 27 171 27Z" fill="url(#tabOn)" /></svg>
        <Fit w={70} className="relative text-[15px] text-white">Drawing1*</Fit>
        <S w={9} h={9} className="relative ml-[46px]"><path d="M1 1L8 8M8 1L1 8" stroke="#4c4c4c" strokeWidth={2} /></S>
      </div>
      <S w={28} h={20} className="mt-[9px] ml-px"><path d="M0 0H18C25 2 28 9 28 20H12C5 18 1 10 0 0Z" fill="#565656" /><path d="M9 10.500H19M14 5.500V15.500" stroke="#bdbdbd" strokeWidth={2.400} /></S>
    </div>
  );
}

const X0 = 41.600, XS = 71.750, Y0 = 315.400;

function Grid() {
  const lines: ReactNode[] = [];
  for (let i = -2; i <= 130; i++) {
    const x = Math.floor(X0 + (i * XS) / 5) + 0.500;
    if (x > 10) lines.push(<path key={"v" + i} d={`M${x} 292V986`} stroke={i % 5 === 0 ? "#343d48" : "#242c36"} />);
  }
  for (let i = -1; i <= 46; i++) {
    const y = Math.floor(Y0 + (i * XS) / 5) + 0.500;
    lines.push(<path key={"h" + i} d={`M10 ${y}H1910`} stroke={i % 5 === 0 ? "#343d48" : "#242c36"} />);
  }
  return <g>{lines}</g>;
}

function Canvas() {
  return (
    <main className="relative h-[694px] overflow-hidden bg-[#202730]">
      <svg width={1900} height={694} viewBox="10 292 1900 694" className="absolute inset-0">
        <Grid />
        <path d="M42.500 292V950" stroke="#2d6b34" />
        <path d="M92 961.500H1910" stroke="#7d2a33" strokeWidth={1.200} />
        <g stroke="#f0f0f0" fill="none" strokeWidth={1.200}>
          <path d="M41.500 911V961.500H92" /><rect x={37.500} y={956.500} width={9} height={9} />
          <path d="M43.500 894L49.500 901L55.500 894M49.500 901V907" /><path d="M96 947L109 960M109 947L96 960" />
        </g>
        <g stroke="#8a9098" fill="none" strokeDasharray="1.2 2.6" strokeWidth={1.200}>
          <path d="M450 616L423.500 573L758 371.500L784.500 414" /><path d="M450 616.500H840.500A390.500 390.500 0 0 0 784.500 414" />
        </g>
        <g fill="#7c828a"><circle cx={423.500} cy={573} r={1.600} /><circle cx={758.500} cy={371.500} r={1.600} /><circle cx={840.500} cy={616} r={1.600} /></g>
        <ellipse cx={773} cy={409} rx={15.300} ry={15.500} fill="#8c8f1c" />
        <path d="M449.500 616L784.500 414.500" stroke="#f4f4f4" strokeWidth={1.200} />
        <path d="M736.500 414.500H833M784.500 366V463" stroke="#fff" />
        <circle cx={1829} cy={395.700} r={52.500} fill="none" stroke="#434852" strokeWidth={12} />
        <g fill="#b4b7bd" fontFamily="Liberation Sans, Arial, sans-serif" fontWeight={700} fontSize={20} textAnchor="middle">
          <text x={1829} y={349}>N</text><text x={1829} y={458}>S</text><text x={1775} y={403.500}>W</text><text x={1883.500} y={403.500}>E</text>
        </g>
        <rect x={1804.500} y={371.500} width={49} height={49} fill="#b2b4b8" stroke="#8c8e92" /><rect x={1813} y={380} width={32} height={32} fill="#a6abb4" />
      </svg>
      <div className="absolute top-[94px] left-[1809px] text-[13px] font-bold text-[#4a4f58]"><Fit w={21}>TOP</Fit></div>
      <div className="absolute top-[4px] left-[3px] text-[12.500px] text-[#e6e6e6]"><Fit w={124}>[−][Top][2D Wireframe]</Fit></div>
      <div className="absolute top-[9px] left-[1839px] flex items-end gap-[10px]">
        <S w={10} h={11}><rect y={8} width={10} height={3} fill="#e4e8f0" /></S>
        <S w={10} h={11}><path d="M2.500 1h7v7" fill="none" stroke="#e4e8f0" /><rect x={1} y={4} width={6} height={6} fill="none" stroke="#e4e8f0" strokeWidth={2} /></S>
        <S w={9} h={11}><path d="M.5 2L8.500 10M8.500 2L.5 10" stroke="#e4e8f0" strokeWidth={2.200} /></S>
      </div>
      <div className="absolute top-[189px] left-[1795px] flex h-[17px] w-[48px] items-center rounded-[4px] border border-[#a0a3ae] bg-[#8a8d98] pl-[3px] text-[11px] text-[#5c606a]">
        <Fit w={24} className="-mt-[2px]">WCS</Fit><S w={8} h={5} className="ml-[6px]"><path d="M0 0H8L4 5Z" fill="#a0a3ad" /></S>
      </div>
      <div className="absolute top-[133px] left-[779px] flex h-[28px] w-[177px] items-center border-[1.500px] border-black bg-[#97989b] pl-[5px] text-[15px] text-[#1c1c1c]">
        <Fit w={138} className="-mt-[5px]">Specify next point or</Fit>
        <S w={13} h={14} className="mt-[3px] ml-[15px]"><rect x={0.500} y={0.500} width={13} height={13} rx={2.500} fill="#e4ecff" stroke="#2a44c0" strokeWidth={1.200} /><path d="M7 2.500V9M4 6.500l3 3 3-3M3.500 11.500h7" stroke="#1a2f9c" strokeWidth={1.400} fill="none" /></S>
      </div>
      <div className="absolute top-[167px] left-[540px] flex h-[25px] w-[68px] items-center border border-black bg-white pl-[5px] text-[15px] text-white">
        <span className="flex h-[20px] bg-[#3897fb]"><Fit w={51} className="-mt-px">13.4061</Fit></span>
      </div>
      <div className="absolute top-[205px] left-[789px] flex h-[25px] w-[39px] items-center border border-black bg-[#97989b] pl-[5px] text-[15px] text-[#1c1c1c]"><Fit w={22} className="-mt-[2px]">33°</Fit></div>
      <div className="absolute top-[232px] left-[1864px] h-[212px] w-[32px] rounded-[4px] bg-[#5b5f68]">
        <S w={32} h={212}>
          <g fill="none" stroke="#464b54" strokeWidth={1.100}>
            <circle cx={26} cy={5} r={3} /><path d="M24.500 3.500l3 3m0-3l-3 3" />
            <path d="M16 19H27V30A11 11 0 1 1 16 19Z" /><circle cx={16} cy={30} r={6} />
            <path d="M11 80L6 72c0-2 2-2 4 1l2 1-2-9c0-2 2-2 3 0l2 6V63c0-2 3-2 3 0v8l2-7c1-2 3-1 3 1l-1 8 2-4c1-2 3-1 2 1l-4 13H13z" />
            <path d="M5 90L21 106M19 90L5 105M5 95V90H10M14 90H19V95M5 100V105H10" /><circle cx={20} cy={104} r={5} /><path d="M23.500 108L27 111" strokeWidth={2.500} />
            <path d="M14 148V133H11L16 127L20 133H18V148Z" /><path d="M12 145C4 143 4 137 14 136M18 136C30 137 30 143 18 144" /><path d="M8 145l4-3v5z" />
            <rect x={5} y={169} width={6} height={6} /><rect x={13} y={169} width={6} height={6} /><rect x={21} y={169} width={6} height={6} /><rect x={5} y={178.500} width={15} height={13} />
            <rect x={23.500} y={204} width={5} height={4} />
          </g>
          <g fill="#41464f"><path d="M13 49h6l-3 3zM13 119h6l-3 3zM13 157h6l-3 3zM9.500 181l7 4-7 4z" /></g>
        </S>
      </div>
    </main>
  );
}

const Cell = ({ className, children }: { className: string; children?: ReactNode }) => (
  <div className={"flex h-[32px] shrink-0 items-center border border-[#8a8a8a] " + className}>{children}</div>
);

const Person = ({ f }: { f: string }) => (
  <path d="M10 0C12 3 12 7 12 10L20 17L18 20L10 14.500L2 20L0 17L8 10C8 7 8 3 10 0Z" fill={f} />
);

function StatusBar() {
  return (
    <footer className="flex h-[36px] justify-between border-t border-[#6a6a6a] bg-[#383838]">
      <div className="flex pl-[14px]">
        <div className="relative h-[23px] w-[78px] pl-[15px]">
          <svg width={82} height={23} className="absolute top-0 left-0"><path d="M-6 0C6 0 4 22 14 22H66C76 22 72 0 84 0Z" fill="url(#modelOn)" /></svg>
          <Fit w={44} className="relative -mt-px text-[15px] font-bold text-white">Model</Fit>
        </div>
        <div className="relative h-[23px] w-[80px] pl-[10px]">
          <svg width={82} height={23} className="absolute top-0 left-0"><path d="M-4 0C0 0-2 22 8 22H66C76 22 72 0 80 0Z" fill="url(#layoutOff)" /></svg>
          <Fit w={51} className="relative -mt-px text-[15px] text-[#b8b8b8]">Layout1</Fit>
        </div>
        <div className="relative h-[23px] w-[82px] pl-[11px]">
          <svg width={92} height={23} className="absolute top-0 left-0"><path d="M-4 0C0 0-2 22 8 22H66C78 22 76 0 92 0Z" fill="url(#layoutOff)" /></svg>
          <Fit w={52} className="relative -mt-px text-[15px] text-[#b8b8b8]">Layout2</Fit>
        </div>
        <S w={29} h={20} className="relative mt-[1px]"><path d="M0 20C1 8 5 0 14 0H29C28 12 24 20 15 20Z" fill="#575757" stroke="#3a3a3a" /><path d="M10 10H20M15 5V15" stroke="#cdcdcd" strokeWidth={3} /></S>
      </div>
      <div className="flex h-[35px] w-[709px] gap-[1px] bg-[#535353]">
        <Cell className="w-[60px] pl-[4px]"><Fit w={51} className="text-[15px] text-white">MODEL</Fit></Cell>
        <Cell className="w-[81px]">
          <S w={18} h={19} className="ml-[7px] drop-shadow-[0_0_2px_#1a7aff]"><path d="M3 0V19M7.500 0V19M12 0V19M16 0V19M0 3H18M0 7.500H18M0 12H18M0 16H18" stroke="#3390f5" strokeWidth={1.600} /></S>
          <S w={18} h={18} className="ml-[11px]"><path d="M0 1H18M0 5H18M0 9H18M0 13H18M0 17H18" stroke="#bbb" strokeWidth={1.400} strokeDasharray="1.4 2.6" /></S>
          <Caret big className="ml-[11px] scale-x-90" />
        </Cell>
        <Cell className="w-[130px] border-r-0">
          <S w={17} h={16} className="ml-[7px]"><path d="M1 0V15H17" fill="none" stroke="#aaa" strokeWidth={1.800} /><rect x={1} y={9} width={6} height={6} fill="none" stroke="#aaa" /></S>
          <S w={20} h={18} className="ml-[12px]"><circle cx={9} cy={9} r={8} fill="none" stroke="#aaa" strokeWidth={1.700} /><path d="M9 9H20M9 9L16 2M14 5v8" stroke="#aaa" strokeWidth={1.500} fill="none" /></S>
          <Caret big className="ml-[9px] scale-x-90" />
          <S w={22} h={24} className="ml-[10px]"><path d="M0 2L21 23M11 0V24" stroke="#aaa" strokeWidth={1.600} /></S>
          <Caret big className="ml-[8px] scale-x-90" />
        </Cell>
        <Cell className="-ml-[1px] w-[82px]">
          <S w={20} h={16} className="ml-[5px]"><path d="M0 15H20M2 13L15 1" stroke="#aaa" strokeWidth={1.700} /><rect x={6} y={5.500} width={4} height={4} fill="#ccc" /></S>
          <S w={20} h={20} className="ml-[11px] drop-shadow-[0_0_1.500px_#1a7aff]"><rect x={2} y={2} width={16} height={16} fill="none" stroke="#3390f5" strokeWidth={1.600} /><rect x={0} y={0} width={6} height={6} fill="#1fae1f" stroke="#063d06" strokeWidth={1.500} /></S>
          <Caret big className="ml-[9px] scale-x-90" />
        </Cell>
        <Cell className="w-[133px]">
          <S w={21} h={21} className="ml-[5px] drop-shadow-[0_0_2px_#1a7aff]"><Person f="#3390f5" /><circle cx={15} cy={5} r={3} fill="none" stroke="#3390f5" strokeWidth={1.500} /></S>
          <S w={20} h={20} className="ml-[9px]"><Person f="#bbb" /><path d="M16 0l-4 5h6l-4 5" fill="none" stroke="#ccc" strokeWidth={1.300} /></S>
          <S w={20} h={20} className="ml-[10px]"><Person f="#bbb" /></S>
          <Fit w={16} className="ml-[11px] text-[15px] text-[#f4f0e4]">1:1</Fit>
          <Caret big className="ml-[4px] scale-x-90" />
        </Cell>
        <Cell className="w-[51px]">
          <S w={16} h={16} className="ml-[7px]"><circle cx={8} cy={8} r={4.500} fill="none" stroke="#ccc" strokeWidth={3.800} /><path d="M8 0V3M8 13V16M0 8H3M13 8H16M2.300 2.300l2 2M11.700 11.700l2 2M13.700 2.300l-2 2M4.300 11.700l-2 2" stroke="#ccc" strokeWidth={3} /></S>
          <Caret big className="ml-[11px] scale-x-90" />
        </Cell>
        <Cell className="-ml-[2px] w-[32px] justify-center"><S w={18} h={18}><path d="M9 0V18M0 9H18" stroke="#ccc" strokeWidth={2} /></S></Cell>
        <Cell className="w-[31px] justify-center"><S w={20} h={19}><rect x={1} y={1} width={8} height={8} fill="none" stroke="#bbb" strokeWidth={1.500} /><circle cx={15} cy={8} r={4.200} fill="none" stroke="#bbb" strokeWidth={1.500} /><path d="M9 11.500L13.500 18H4.500Z" fill="none" stroke="#bbb" strokeWidth={1.500} /></S></Cell>
        <Cell className="w-[33px] justify-center"><S w={20} h={20} className="drop-shadow-[0_0_3px_#1a7aff]"><circle cx={10} cy={10} r={9.500} fill="#1667bd" stroke="#2a85e4" /><path d="M9 11L12 14L15 9" stroke="#86b8ea" strokeWidth={1.500} fill="none" /></S></Cell>
        <Cell className="w-[6px]" />
        <Cell className="w-[62px]">
          <S w={20} h={15} className="ml-[5px]"><rect x={0.800} y={0.800} width={18.400} height={13.400} fill="none" stroke="#ccc" strokeWidth={1.500} /><path d="M12 3h5v5zM3 7v5h5zM16 4l-3 3M4 11l3-3" fill="#ccc" stroke="#ccc" strokeWidth={1.200} /></S>
          <S w={19} h={16} className="ml-[11px]"><path d="M0 1.200H19M0 8H19M0 14.800H19" stroke="#ccc" strokeWidth={2.400} /></S>
        </Cell>
      </div>
    </footer>
  );
}

function Taskbar() {
  return (
    <div className="flex h-[50px] bg-black">
      <div className="flex w-[60px] items-center justify-center"><S w={20} h={20}><path d="M0 3L8.500 1.800V9.500H0ZM9.500 1.600L20 0V9.500H9.500ZM0 10.500H8.500V18.200L0 17ZM9.500 10.500H20V20L9.500 18.400Z" fill="#fff" /></S></div>
      <div className="flex w-[430px] items-center bg-[#333]">
        <S w={28} h={28} className="ml-[11px]"><circle cx={14} cy={14} r={11.500} fill="none" stroke="#fff" strokeWidth={3.400} /></S>
        <Fit w={132} className="ml-[6px] text-[18px] text-[#9c9c9c]">Ask me anything</Fit>
        <S w={14} h={20} className="mr-[19px] ml-auto"><rect x={3} y={0.700} width={8} height={13} rx={1} fill="none" stroke="#a8a8a8" strokeWidth={1.400} /><path d="M.7 10v3c0 2 1 3.500 3 3.500h6.500c2 0 3-1.500 3-3.500v-3M7 16v3.300M3.500 19.300h7" fill="none" stroke="#a8a8a8" strokeWidth={1.400} /></S>
      </div>
      <div className="flex items-center">
        <S w={24} h={18} className="ml-[18px]"><rect x={4.500} y={0.600} width={15.500} height={17} fill="none" stroke="#fff" strokeWidth={1.200} /><path d="M3 4H.6V14.500H3M21.500 4H24V14.500H21.500" fill="none" stroke="#fff" strokeWidth={1.200} /></S>
        <S w={25} h={27} className="ml-[40px]"><path d="M0 12C2 3 8 0 13 0c8 0 12 6 11.500 15.500H8c0 6 8 8 15 4.500v5C14 29 3 27 2.500 17.500 2.300 12 6 8.500 10 7.500 8.500 9 8 10.500 8 11.500h9C17 3 5 4 0 12Z" fill="#0a7ad8" /></S>
        <S w={28} h={24} className="ml-[35px]"><path d="M0 1H11L14 4H28V24H0Z" fill="#f5d978" /><path d="M0 6H28V24H0Z" fill="#fce9a0" /><path d="M5 13H23V24H18V18H10V24H5Z" fill="#35a8e6" /></S>
        <S w={26} h={30} className="ml-[35px]"><path d="M5 9C5-1 11-1 13 3M9 8C9-1 18-1 18 8" fill="none" stroke="#fff" strokeWidth={1.500} /><path d="M0 8L26 5V30L0 27Z" fill="#fff" /><path d="M3.500 13L8.500 12.500V17.500H3.500ZM9.700 12.200L16 11.500V17.500H9.700ZM3.500 18.700H8.500V23.500L3.500 23ZM9.700 18.700H16V24.500L9.700 23.700Z" fill="#000" /></S>
        <S w={28} h={28} className="ml-[35px]"><circle cx={14} cy={14} r={13} fill="#0a0a0a" stroke="#7c0d15" strokeWidth={2} strokeDasharray="2 1" /><circle cx={14} cy={14} r={11} fill="#101010" stroke="#8a8a8a" /><text x={14} y={14} textAnchor="middle" fontSize={6} fontWeight={700} fontStyle="italic" fill="#ddd" fontFamily="Liberation Sans, sans-serif" textLength={17} lengthAdjust="spacingAndGlyphs">ASUS</text><text x={14} y={20} textAnchor="middle" fontSize={5} fill="#b09c94" fontFamily="Liberation Sans, sans-serif">GiftBox</text></S>
      </div>
      <div className="ml-[22px] flex w-[51px] flex-col items-center border-b-[3px] border-[#76b4ea] pt-[10px]">
        <S w={30} h={30}><rect width={30} height={30} fill="#e8702a" /><path d="M0 30L30 8V30Z" fill="#f08a3a" opacity={0.600} /><circle cx={15} cy={14} r={5.500} fill="#fbf6cf" /><path d="M6 9V5.500H10M20 5.500H24V9M24 19V23H20M10 23H6V19" fill="none" stroke="#ffe9cc" strokeWidth={1.400} /></S>
      </div>
      <div className="ml-[6px] flex w-[61px] flex-col items-center border-b-[3px] border-[#76b4ea] bg-[#333] pt-[10px]">
        <S w={30} h={30}><rect width={30} height={30} fill="url(#taskAcad)" /><g transform="translate(5.500 4) scale(.86 .84)"><LogoA /></g></S>
      </div>
      <div className="ml-auto flex items-center">
        <S w={16} h={9}><path d="M.5 8.500L8 1L15.500 8.500" fill="none" stroke="#fff" strokeWidth={1.400} /></S>
        <S w={20} h={14} className="ml-[12px]"><path d="M1.500 0V3M5 0V3M0 3H6.500V6L4 8V11H6" fill="none" stroke="#fff" strokeWidth={1.200} /><rect x={6.500} y={3.500} width={11.500} height={9} fill="#fff" stroke="#fff" /><path d="M19.300 6V10" stroke="#fff" strokeWidth={1.300} /></S>
        <S w={16} h={16} className="ml-[13px]"><path d="M1 15C1 7 7 1 15 1M5 15C5 9 9 5 15 5M9 15C9 11.500 11.500 9 15 9" fill="none" stroke="#ddd" strokeWidth={1.300} /><circle cx={13.500} cy={13.500} r={1.800} fill="#fff" /></S>
        <S w={21} h={18} className="ml-[11px]"><path d="M.6 6.500H3.500L7.500 2.500V15.500L3.500 11.500H.6Z" fill="none" stroke="#fff" strokeWidth={1.200} /><path d="M10.500 6.500c1.500 1.500 1.500 3.500 0 5M13.500 4c3 3 3 7 0 10M16.500 1.500c4.500 4 4.500 11 0 15" fill="none" stroke="#ddd" strokeWidth={1.200} /></S>
        <div className="ml-[12px] flex w-[68px] flex-col items-center gap-[4px] text-[14px] text-white">
          <Fit w={51} className="-mt-px">8:34 PM</Fit><Fit w={68} className="-mb-[1px]">8/29/2016</Fit>
        </div>
        <S w={30} h={30} className="ml-[22px]"><path d="M1 0H21V17H11L6 22V17H1Z" fill="#fff" transform="translate(0 1)" /><path d="M4.500 6H17M4.500 10H17M4.500 14H13" stroke="#111" strokeWidth={1.300} /><circle cx={20} cy={20} r={10} fill="#2b2b2b" stroke="#777" /><text x={20} y={25} textAnchor="middle" fontSize={13} fontWeight={700} fill="#fff" fontFamily="Open Sans, sans-serif">2</text></S>
        <div className="mr-[5px] ml-[16px] h-[50px] w-px bg-[#666]" />
      </div>
    </div>
  );
}

export default function App() {
  return (
    <div className="flex h-[1080px] w-[1920px] flex-col overflow-hidden bg-black pt-[3px] font-['Open_Sans','Noto_Sans',sans-serif]">
      <Defs />
      <div className="flex h-[1019px]">
        <div className="relative w-[10px] overflow-hidden text-[15px] leading-5 text-[#9fc4dc]">
          <span className="absolute top-[324px] left-[5px]">T</span>
          <span className="absolute top-[454px] left-[7px]">I</span>
          <span className="absolute top-[712px] left-[3px] text-[#c4ccd4]">In</span>
        </div>
        <div className="flex w-[1900px] flex-col">
          <TitleBar />
          <CommandLine />
          <RibbonTabs />
          <Ribbon />
          <FileTabs />
          <Canvas />
          <StatusBar />
        </div>
      </div>
      <div className="h-[8px]" />
      <Taskbar />
    </div>
  );
}
